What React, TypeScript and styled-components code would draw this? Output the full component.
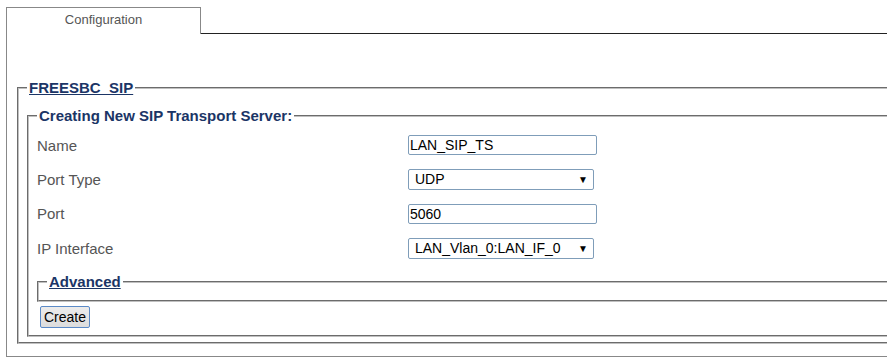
import * as React from "react";
import styled, { createGlobalStyle } from "styled-components";

const GlobalStyle = createGlobalStyle`
  html, body {
    margin: 0;
    padding: 0;
    background: #fff;
    overflow: hidden;
  }
  body {
    font-family: "Liberation Sans", Arial, sans-serif;
  }
`;

const Page = styled.div`
  width: 1000px;
  padding: 7px 0 0 6px;
`;

const TabBar = styled.div`
  display: flex;
  height: 27px;
`;

const Tab = styled.div`
  width: 193px;
  border: 1px solid #888;
  border-bottom: 0;
  background: #fff;
  color: #555;
  font-size: 13px;
  text-align: center;
  line-height: 23px;
`;

const TabFiller = styled.div`
  flex: 1;
  border-bottom: 1px solid #222;
`;

const Panel = styled.div`
  border-left: 1px solid #888;
  border-bottom: 1px solid #888;
  padding: 46px 0 12px 10px;
`;

const Fieldset = styled.fieldset<{ $pad?: string }>`
  margin: 0;
  border: 2px groove #c0c0c0;
  padding: ${(p) => p.$pad || "0 8px 8px 8px"};
  min-width: 0;
`;

const Legend = styled.legend<{ $link?: boolean }>`
  padding: 0 2px;
  font-size: 15px;
  font-weight: bold;
  line-height: 16px;
  color: #1b3566;
  text-decoration: ${(p) => (p.$link ? "underline" : "none")};
`;

const Spacer = styled.div`
  height: 12px;
`;

const FormGrid = styled.div`
  display: grid;
  grid-template-columns: 371px auto;
  grid-auto-rows: 34.33px;
  align-items: center;
  padding-top: 4px;
`;

const Label = styled.div`
  font-size: 15px;
  color: #555;
`;

const Field = styled.div`
  display: flex;
  align-items: center;
  justify-content: flex-start;
`;

const TextInput = styled.input`
  box-sizing: border-box;
  width: 189px;
  height: 20px;
  border: 1px solid #7f9db9;
  border-radius: 2px;
  padding: 0 1px;
  font-family: "Liberation Sans", Arial, sans-serif;
  font-size: 14px;
  color: #000;
  outline: none;
`;

const SelectWrap = styled.div`
  position: relative;
  width: 186px;
  height: 21px;
`;

const Select = styled.select`
  appearance: none;
  box-sizing: border-box;
  width: 100%;
  height: 100%;
  border: 1px solid #7f9db9;
  border-radius: 2px;
  padding: 0 0 0 6px;
  background: #fff;
  font-family: "Liberation Sans", Arial, sans-serif;
  font-size: 14px;
  color: #000;
  outline: none;
`;

const Arrow = styled.span`
  position: absolute;
  right: 6px;
  top: 5px;
  font-size: 10px;
  color: #000;
  pointer-events: none;
`;

const AdvancedWrap = styled.div`
  margin-top: 9px;
`;

const Button = styled.button`
  margin: 4px 0 0 3px;
  height: 22px;
  padding: 0 3px;
  border: 1px solid #5b8ac7;
  border-radius: 2px;
  background: linear-gradient(#ececec, #dcdcdc);
  font-family: "Liberation Sans", Arial, sans-serif;
  font-size: 14px;
  color: #000;
`;

const rows = [
  { label: "Name", kind: "text", value: "LAN_SIP_TS" },
  { label: "Port Type", kind: "select", value: "UDP" },
  { label: "Port", kind: "text", value: "5060" },
  { label: "IP Interface", kind: "select", value: "LAN_Vlan_0:LAN_IF_0" },
];

function App() {
  return (
    <Page>
      <GlobalStyle />
      <TabBar>
        <Tab>Configuration</Tab>
        <TabFiller />
      </TabBar>
      <Panel>
        <Fieldset $pad="0 8px 5px 8px">
          <Legend $link>FREESBC_SIP</Legend>
          <Spacer />
          <Fieldset $pad="0 8px 7px 8px">
            <Legend>Creating New SIP Transport Server:</Legend>
            <FormGrid>
              {rows.map((r) => (
                <React.Fragment key={r.label}>
                  <Label>{r.label}</Label>
                  <Field>
                    {r.kind === "text" ? (
                      <TextInput defaultValue={r.value} />
                    ) : (
                      <SelectWrap>
                        <Select defaultValue={r.value}>
                          <option>{r.value}</option>
                        </Select>
                        <Arrow>▼</Arrow>
                      </SelectWrap>
                    )}
                  </Field>
                </React.Fragment>
              ))}
            </FormGrid>
            <AdvancedWrap>
              <Fieldset $pad="0 8px 10px 8px">
                <Legend $link>Advanced</Legend>
              </Fieldset>
            </AdvancedWrap>
            <Button>Create</Button>
          </Fieldset>
        </Fieldset>
      </Panel>
    </Page>
  );
}

export default App;
